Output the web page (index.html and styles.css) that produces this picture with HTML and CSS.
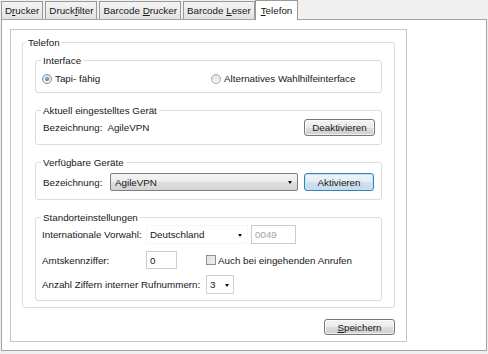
FILE: index.html
```html
<!DOCTYPE html>
<html lang="de">
<head>
  <meta charset="UTF-8">
  <title>Einstellungen - Telefon</title>
  <link rel="stylesheet" href="styles.css">
</head>
<body>
  <div class="window">
    <div class="tabs">
      <div class="tab">D<u>r</u>ucker</div>
      <div class="tab">Druck<u>f</u>ilter</div>
      <div class="tab">Barcode <u>D</u>rucker</div>
      <div class="tab last">Barcode <u>L</u>eser</div>
      <div class="tab active"><u>T</u>elefon</div>
    </div>
    <div class="page">
      <div class="panel">
        <fieldset class="group outer">
          <legend>Telefon</legend>

          <fieldset class="group">
            <legend>Interface</legend>
            <div class="row radios">
              <label class="radio-item first"><span class="radio checked"></span>Tapi- fähig</label>
              <label class="radio-item"><span class="radio"></span>Alternatives Wahlhilfeinterface</label>
            </div>
          </fieldset>

          <fieldset class="group">
            <legend>Aktuell eingestelltes Gerät</legend>
            <div class="row current">
              <span class="lbl short">Bezeichnung:</span>
              <span>AgileVPN</span>
              <button class="btn push-right">Deaktivieren</button>
            </div>
          </fieldset>

          <fieldset class="group">
            <legend>Verfügbare Geräte</legend>
            <div class="row avail">
              <span class="lbl wide">Bezeichnung:</span>
              <div class="combo device">AgileVPN<span class="arrow"></span></div>
              <button class="btn default">Aktivieren</button>
            </div>
          </fieldset>

          <fieldset class="group std">
            <legend>Standorteinstellungen</legend>
            <div class="row">
              <span class="lbl col1">Internationale Vorwahl:</span>
              <div class="combo flat country">Deutschland<span class="arrow"></span></div>
              <input class="field code" type="text" value="0049" disabled>
            </div>
            <div class="row">
              <span class="lbl col1">Amtskennziffer:</span>
              <input class="field prefix" type="text" value="0">
              <label class="check-item"><span class="check"></span>Auch bei eingehenden Anrufen</label>
            </div>
            <div class="row">
              <span class="lbl digits-lbl">Anzahl Ziffern interner Rufnummern:</span>
              <div class="combo boxed digits">3<span class="arrow"></span></div>
            </div>
          </fieldset>
        </fieldset>

        <div class="actions">
          <button class="btn save"><u>S</u>peichern</button>
        </div>
      </div>
    </div>
  </div>
</body>
</html>
```

FILE: styles.css
```css
body {
  margin: 0;
  background: #f0f0f0;
  font-family: "Liberation Sans", Arial, sans-serif;
  font-size: 9.8px;
  line-height: 11px;
  color: #181818;
}
.window {
  width: 486px;
  padding-left: 1px;
}
.tabs {
  display: flex;
  align-items: flex-end;
  height: 19px;
  position: relative;
  z-index: 1;
}
.tab {
  height: 17px;
  line-height: 17px;
  padding: 0 3px;
  border: 1px solid #9a9a9a;
  border-bottom: none;
  background: linear-gradient(#f4f4f4, #e2e2e2);
  margin-right: 2px;
}
.tab.last {
  margin-right: 0;
}
.tab.active {
  height: 19px;
  line-height: 19px;
  background: #fff;
  margin-bottom: -1px;
  padding: 0 5px;
}
.page {
  box-sizing: border-box;
  height: 332px;
  background: #fff;
  border: 1px solid #a4a4a4;
  padding: 9px 0 0 8px;
}
.panel {
  box-sizing: border-box;
  width: 397px;
  border: 1px solid #c6c6c6;
  padding: 7px 11px 6px;
}
.group {
  margin: 12px 12px 0;
  padding: 0;
  min-width: 0;
  border: 1px solid #dcdcdc;
  border-radius: 3px;
}
.group legend {
  margin-left: 5px;
  padding: 0 2px;
  line-height: 11px;
}
.outer {
  margin: 0;
  padding: 7px 0 6px;
}
.outer > legend {
  margin-left: 3px;
}
.outer > .group:first-of-type {
  margin-top: 0;
}

.row {
  display: flex;
  align-items: center;
  padding: 0 6px 0 7px;
}
.lbl {
  flex: none;
}

/* Interface */
.radios {
  height: 13px;
  padding: 6px 6px 7px 6px;
}
.radio-item {
  display: flex;
  align-items: center;
}
.radio-item.first {
  width: 169px;
}
.radio {
  box-sizing: border-box;
  width: 10px;
  height: 10px;
  margin-right: 3px;
  border: 1px solid #a9a9a9;
  border-radius: 50%;
  background: linear-gradient(#e0e0e0, #f8f8f8);
  display: flex;
  align-items: center;
  justify-content: center;
}
.radio.checked {
  border-color: #7f8a96;
}
.radio.checked::after {
  content: "";
  width: 4px;
  height: 4px;
  border-radius: 50%;
  background: radial-gradient(circle at 40% 35%, #8ec1ea, #1f4f7d);
}

/* Geräte */
.current {
  height: 17px;
  padding-top: 3px;
  padding-bottom: 8px;
}
.avail {
  height: 18px;
  padding-top: 5px;
  padding-bottom: 8px;
}
.lbl.short {
  margin-right: 5px;
}
.lbl.wide {
  width: 67px;
}
.push-right {
  margin-left: auto;
}
.btn {
  box-sizing: border-box;
  height: 17px;
  width: 71px;
  padding: 0;
  font: inherit;
  color: #181818;
  border: 1px solid #777;
  border-radius: 3px;
  background: linear-gradient(#f3f3f3 0%, #ebebeb 50%, #dcdcdc 51%, #cfcfcf 100%);
  box-shadow: inset 0 0 0 1px rgba(255, 255, 255, 0.7);
}
.btn.default {
  width: 70px;
  height: 18px;
  margin-left: 6px;
  border-color: #3c7fb1;
  background: linear-gradient(#eef5fa 0%, #e3edf5 50%, #d3e1ec 51%, #c7d8e6 100%);
  box-shadow: inset 0 0 0 1px #bfe3f7;
}
.combo {
  box-sizing: border-box;
  position: relative;
  display: flex;
  align-items: center;
  padding-left: 4px;
}
.arrow {
  position: absolute;
  top: 50%;
  margin-top: -1px;
  width: 0;
  height: 0;
  border-left: 2.5px solid transparent;
  border-right: 2.5px solid transparent;
  border-top: 3px solid #111;
}
.combo.device {
  width: 188px;
  height: 18px;
  border: 1px solid #7e7e7e;
  border-radius: 2px;
  background: linear-gradient(#f4f4f4 0%, #ececec 50%, #dedede 51%, #d4d4d4 100%);
}
.combo.device .arrow {
  right: 5px;
}

/* Standort */
.std .row {
  padding-left: 6px;
}
.std .row:first-of-type {
  margin-top: 2px;
}
.std .row + .row {
  margin-top: 7px;
}
.std .row:last-child {
  margin-top: 6px;
  margin-bottom: 6px;
}
.lbl.col1 {
  width: 104px;
}
.lbl.digits-lbl {
  width: 164px;
}
.combo.flat {
  width: 102px;
  height: 19px;
  padding-left: 3px;
  border: 1px solid #f6f6f6;
  background: #fff;
}
.combo.flat .arrow {
  right: 5px;
}
.combo.boxed {
  width: 28px;
  height: 19px;
  padding-left: 3px;
  border: 1px solid #cfcfcf;
  background: #fff;
}
.combo.boxed .arrow {
  right: 4px;
}
.field {
  box-sizing: border-box;
  height: 19px;
  margin: 0;
  padding: 0 3px;
  font: inherit;
  color: #181818;
  border: 1px solid #cfcfcf;
  background: #fff;
  outline: none;
}
.field.code {
  width: 45px;
  margin-left: 3px;
  color: #a3a3a3;
  border-color: #cbcbcb;
}
.field.prefix {
  width: 31px;
  height: 18px;
}
.check-item {
  display: flex;
  align-items: center;
  margin-left: 29px;
}
.check {
  box-sizing: border-box;
  width: 10px;
  height: 10px;
  margin-right: 2px;
  border: 1px solid #8e8e8e;
  background: linear-gradient(135deg, #d8d8d8, #f6f6f6);
  box-shadow: inset 0 0 0 1px #e8e8e8;
}

.actions {
  display: flex;
  justify-content: flex-end;
  margin-top: 11px;
}
.btn.save {
  height: 16px;
}
```
